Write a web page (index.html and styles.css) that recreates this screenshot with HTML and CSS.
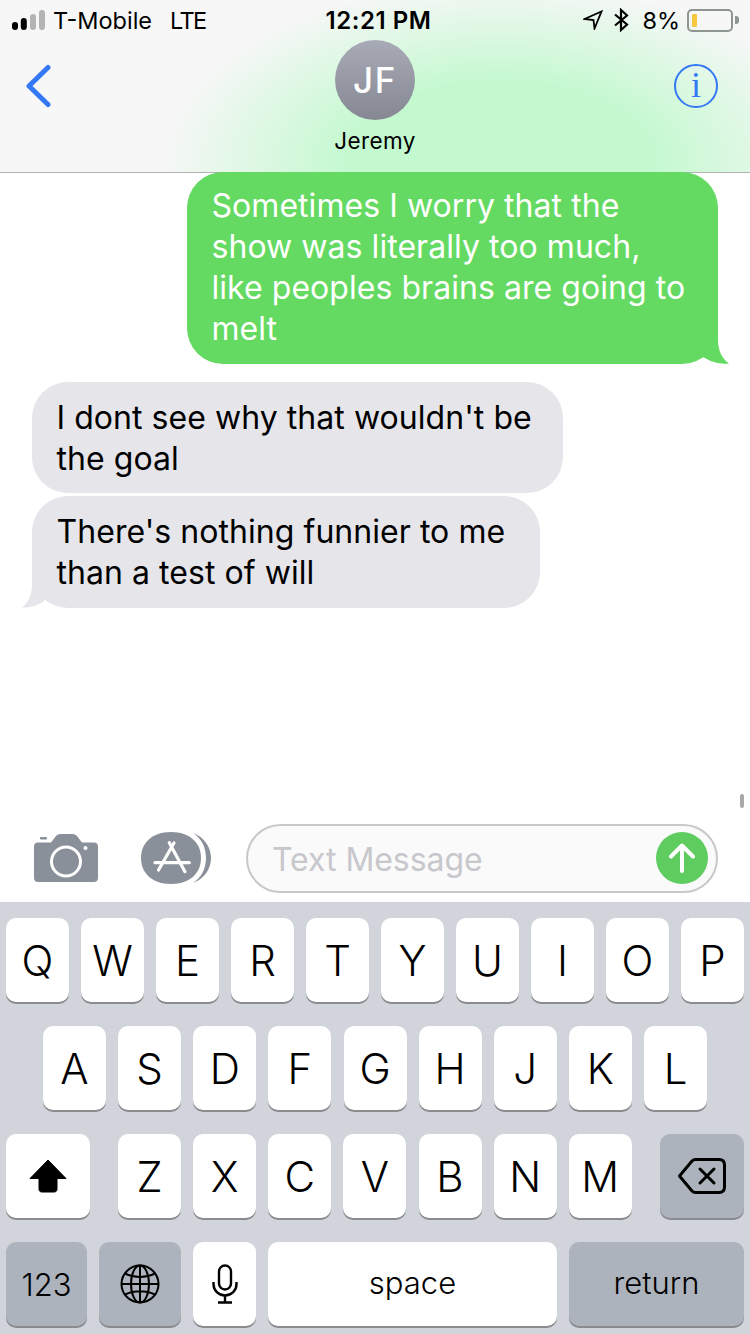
FILE: index.html
```html
<!DOCTYPE html>
<html lang="en">
<head>
<meta charset="utf-8">
<title>Messages</title>
<link rel="stylesheet" href="styles.css">
</head>
<body>
<div class="phone">
  <header class="header">
    <div class="status">
      <div class="status-side">
        <svg class="signal" width="33" height="20" viewBox="0 0 33 20"><rect x="0" y="12" width="6" height="8" rx="3" fill="#000"/><rect x="8.800" y="8" width="6" height="12" rx="3" fill="#000"/><rect x="18" y="4" width="6" height="16" rx="3" fill="#b4b4b4"/><rect x="27" y="0" width="6" height="20" rx="3" fill="#b4b4b4"/></svg>
        <span class="carrier">T-Mobile</span>
        <span class="network">LTE</span>
      </div>
      <div class="clock">12:21 PM</div>
      <div class="status-side status-right">
        <svg width="20" height="20" viewBox="0 0 20 20"><path d="M1.500 9 18.500 1.500 11.500 18.500 10.500 10Z" fill="none" stroke="#000" stroke-width="1.800" stroke-linejoin="miter"/></svg>
        <svg class="bt" width="15" height="24" viewBox="0 0 15 24"><path d="M1 6.500 13 16.500 7 22V2L13 7.500 1 17.500" fill="none" stroke="#000" stroke-width="2.200"/></svg>
        <span class="percent">8%</span>
        <div class="battery"><div class="battery-body"><div class="battery-fill"></div></div><div class="battery-cap"></div></div>
      </div>
    </div>
    <nav class="nav">
      <svg class="back" width="26" height="44" viewBox="0 0 26 44"><path d="M22 3.500 3 22 22 40.500" fill="none" stroke="#3478f6" stroke-width="5" stroke-linecap="round" stroke-linejoin="round"/></svg>
      <div class="contact">
        <div class="avatar">JF</div>
        <div class="name">Jeremy</div>
      </div>
      <div class="info">i</div>
    </nav>
  </header>

  <main class="thread">
    <div class="bubble sent">
      Sometimes I worry that the<br>show was literally too much,<br>like peoples brains are going to<br>melt
      <svg class="tail tail-right" width="30" height="40" viewBox="0 0 30 40"><path d="M0 0H18V16C18 26 22 35 29 39.500C20 40.500 11 38 4 33.500L0 33Z" fill="#65da62"/></svg>
    </div>
    <div class="bubble received first">I dont see why that wouldn't be<br>the goal</div>
    <div class="bubble received second">
      There's nothing funnier to me<br>than a test of will
      <svg class="tail tail-left" width="30" height="40" viewBox="0 0 30 40"><path d="M11 0V16C11 26 8 34 1 39.500C9 40 18 37 24 32V0Z" fill="#e5e5ea"/></svg>
    </div>
    <div class="scroll-thumb"></div>
  </main>

  <section class="composer">
    <svg class="camera" width="64" height="48" viewBox="0 0 64 48">
      <path fill="#8a9099" fill-rule="evenodd" d="M4 8.500H17L20.500 4C22 1.500 24 0 27 0H38C41 0 43 1.500 44.500 4L48 8.500H60C62.500 8.500 64 10 64 12.500V44C64 46.500 62.500 48 60 48H4C1.500 48 0 46.500 0 44V12.500C0 10 1.500 8.500 4 8.500ZM32 11.500A16 16 0 1 0 32 43.500 16 16 0 1 0 32 11.500ZM32 14.500A13 13 0 1 1 32 40.500 13 13 0 1 1 32 14.500ZM51.500 12A2 2 0 1 0 51.500 16 2 2 0 1 0 51.500 12Z"/>
      <rect x="6" y="3" width="7" height="2.500" rx="1" fill="#8a9099"/>
    </svg>
    <svg class="apps" width="70" height="52" viewBox="0 0 70 52">
      <path d="M52 1C63 5 70 15 70 26S63 47 52 51C60 46 65 37 65 26S60 6 52 1Z" fill="#8a9099"/>
      <path d="M30 0C49 0 60 11 60 26S49 52 30 52 0 41 0 26 11 0 30 0Z" fill="#8a9099"/>
      <path d="M33 11 17.500 38M28.300 10.700 44 39.700M14 30.700H48.300" stroke="#fff" stroke-width="3.200" stroke-linecap="round" fill="none"/>
    </svg>
    <div class="field">
      <span class="placeholder">Text Message</span>
      <div class="send">
        <svg width="28" height="32" viewBox="0 0 28 32"><path d="M14 29V4M3 14.500 14 3.500 25 14.500" fill="none" stroke="#fff" stroke-width="4" stroke-linecap="round" stroke-linejoin="round"/></svg>
      </div>
    </div>
  </section>

  <section class="keyboard">
    <div class="row">
      <div class="key">Q</div><div class="key">W</div><div class="key">E</div><div class="key">R</div><div class="key">T</div><div class="key">Y</div><div class="key">U</div><div class="key">I</div><div class="key">O</div><div class="key">P</div>
    </div>
    <div class="row row-home">
      <div class="key">A</div><div class="key">S</div><div class="key">D</div><div class="key">F</div><div class="key">G</div><div class="key">H</div><div class="key">J</div><div class="key">K</div><div class="key">L</div>
    </div>
    <div class="row row-shift">
      <div class="key wide">
        <svg width="38" height="34" viewBox="0 0 38 34"><path d="M19 1 37 19.500H28V30C28 32 27 33 25 33H13C11 33 10 32 10 30V19.500H1Z" fill="#000" stroke="#000" stroke-width="1" stroke-linejoin="round"/></svg>
      </div>
      <div class="letters">
        <div class="key">Z</div><div class="key">X</div><div class="key">C</div><div class="key">V</div><div class="key">B</div><div class="key">N</div><div class="key">M</div>
      </div>
      <div class="key wide dark">
        <svg width="48" height="36" viewBox="0 0 48 36"><path d="M1.500 18 14 3C15 2 16 1.500 17.500 1.500H41C44.500 1.500 46.500 3.500 46.500 7V29C46.500 32.500 44.500 34.500 41 34.500H17.500C16 34.500 15 34 14 33Z" fill="none" stroke="#000" stroke-width="3" stroke-linejoin="round"/><path d="M22 11 36 25M36 11 22 25" stroke="#000" stroke-width="3" stroke-linecap="round"/></svg>
      </div>
    </div>
    <div class="row">
      <div class="key dark small k123">123</div>
      <div class="key dark kglobe">
        <svg width="40" height="40" viewBox="0 0 40 40" fill="none" stroke="#000" stroke-width="2"><circle cx="20" cy="20" r="18.500"/><ellipse cx="20" cy="20" rx="9" ry="18.500"/><path d="M20 1.500V38.500M1.500 20H38.500M5 9.500C14 14 26 14 35 9.500M5 30.500C14 26 26 26 35 30.500"/></svg>
      </div>
      <div class="key">
        <svg width="26" height="40" viewBox="0 0 26 40" fill="none" stroke="#000" stroke-width="2.400"><rect x="7" y="1.500" width="12" height="24" rx="6"/><path d="M1.500 18V20C1.500 26.500 6.500 31.500 13 31.500S24.500 26.500 24.500 20V18M13 31.500V38.500M6 38.500H20"/></svg>
      </div>
      <div class="key small word kspace">space</div>
      <div class="key dark small word kreturn">return</div>
    </div>
  </section>
</div>
</body>
</html>
```
FILE: styles.css
```css
* { box-sizing: border-box; }
html, body { margin: 0; padding: 0; }
body { font-family: Inter, "Liberation Sans", sans-serif; background: #fff; color: #000; }
.phone { width: 750px; height: 1334px; display: flex; flex-direction: column; overflow: hidden; }

.header {
  height: 173px;
  border-bottom: 1px solid #b2b2b2;
  background:
    radial-gradient(ellipse 340px 185px at 500px 165px, #c4f9d0 0%, #c4f9d0 45%, rgba(196,249,208,.45) 75%, rgba(196,249,208,0) 100%),
    #f7f7f7;
  display: flex;
  flex-direction: column;
}
.status { height: 40px; padding: 0 12px; display: grid; grid-template-columns: 1fr auto 1fr; align-items: center; font-size: 23.500px; }
.status-side { display: flex; align-items: center; gap: 8px; }
.carrier { letter-spacing: 0; }
.network { margin-left: 10px; letter-spacing: -1.600px; }
.clock { font-weight: 600; font-size: 24px; letter-spacing: .55px; padding-left: 7px; }
.status-right { justify-content: flex-end; gap: 0; margin-right: -1px; }
.bt { margin-left: 11px; }
.percent { margin-left: 13px; }
.battery { display: flex; align-items: center; margin-left: 7px; }
.battery-body { width: 46px; height: 23px; border: 2px solid #8f9590; border-radius: 5px; padding: 3px; }
.battery-fill { width: 5px; height: 100%; background: #f7c83e; border-radius: 1px; }
.battery-cap { width: 4px; height: 8px; background: #8f9590; border-radius: 0 3px 3px 0; margin-left: 2px; }

.nav { flex: 1; display: grid; grid-template-columns: 1fr auto 1fr; padding: 0 32px; }
.back { margin: 24px 0 0 -6px; }
.contact { display: flex; flex-direction: column; align-items: center; }
.avatar {
  width: 80px; height: 80px; border-radius: 50%;
  background: linear-gradient(180deg, #a8abb6, #858892);
  color: #fff; font-size: 35px; font-weight: 500; letter-spacing: 1.500px;
  display: flex; align-items: center; justify-content: center;
}
.name { font-size: 22.500px; margin-top: 7px; line-height: 28px; letter-spacing: .35px; }
.info {
  justify-self: end; margin-top: 24px; width: 44px; height: 44px; border-radius: 50%;
  border: 2px solid #3478f6; color: #3478f6;
  font-family: "Liberation Serif", serif; font-size: 36px; line-height: 38px; text-align: center;
}

.thread { flex: 1; position: relative; display: flex; flex-direction: column; margin-top: -1px; }
.bubble { position: relative; font-size: 32px; line-height: 41px; letter-spacing: .05px; border-radius: 36px; padding: 13px 0 15px 24.500px; }
.sent { width: 531px; height: 192px; margin: 0 32px 0 auto; background: #65da62; color: #fff; }
.received { margin-left: 32px; background: #e5e5ea; height: 111px; padding-top: 15px; }
.first { width: 531px; margin-top: 18px; }
.second { width: 508px; margin-top: 3px; height: 112px; }
.tail { position: absolute; bottom: 0; }
.tail-right { right: -12px; }
.tail-left { left: -11px; }
.scroll-thumb { position: absolute; right: 6px; bottom: 15px; width: 4px; height: 14px; background: #a8a8a8; border-radius: 2px; }

.composer { height: 79px; padding: 0 32px 9px 34px; display: flex; align-items: center; }
.apps { margin-left: 43px; }
.field {
  margin-left: 35px; flex: 1; height: 69px; border: 2px solid #c8c8cc; border-radius: 35px; background: #fafafa;
  display: flex; align-items: center; justify-content: space-between; padding: 0 8px 0 24px;
}
.placeholder { font-size: 32px; color: #c7c7cc; letter-spacing: -.05px; padding-top: 2px; }
.send { width: 52px; height: 52px; border-radius: 50%; background: #5fcc5f; display: flex; align-items: center; justify-content: center; }

.keyboard { height: 432px; background: #d1d5db; padding: 16px 6px 0; display: flex; flex-direction: column; gap: 24px; }
.row { display: flex; gap: 12px; }
.row-home { padding-left: 37px; gap: 12.130px; }
.letters { display: flex; gap: 12.130px; margin-left: 16px; margin-right: auto; }
.key {
  width: 63px; height: 84px; flex: none; border-radius: 10px; background: #fff;
  box-shadow: 0 2px 0 #898b8f;
  display: flex; align-items: center; justify-content: center;
  font-size: 42px; font-weight: 350;
}
.small { font-size: 31px; }
.word { padding-bottom: 4px; }
.wide { width: 84px; }
.dark { background: #acb3bd; }
.k123 { width: 81px; }
.kglobe { width: 82px; }
.kspace { width: 289px; }
.kreturn { width: 175px; }
```
